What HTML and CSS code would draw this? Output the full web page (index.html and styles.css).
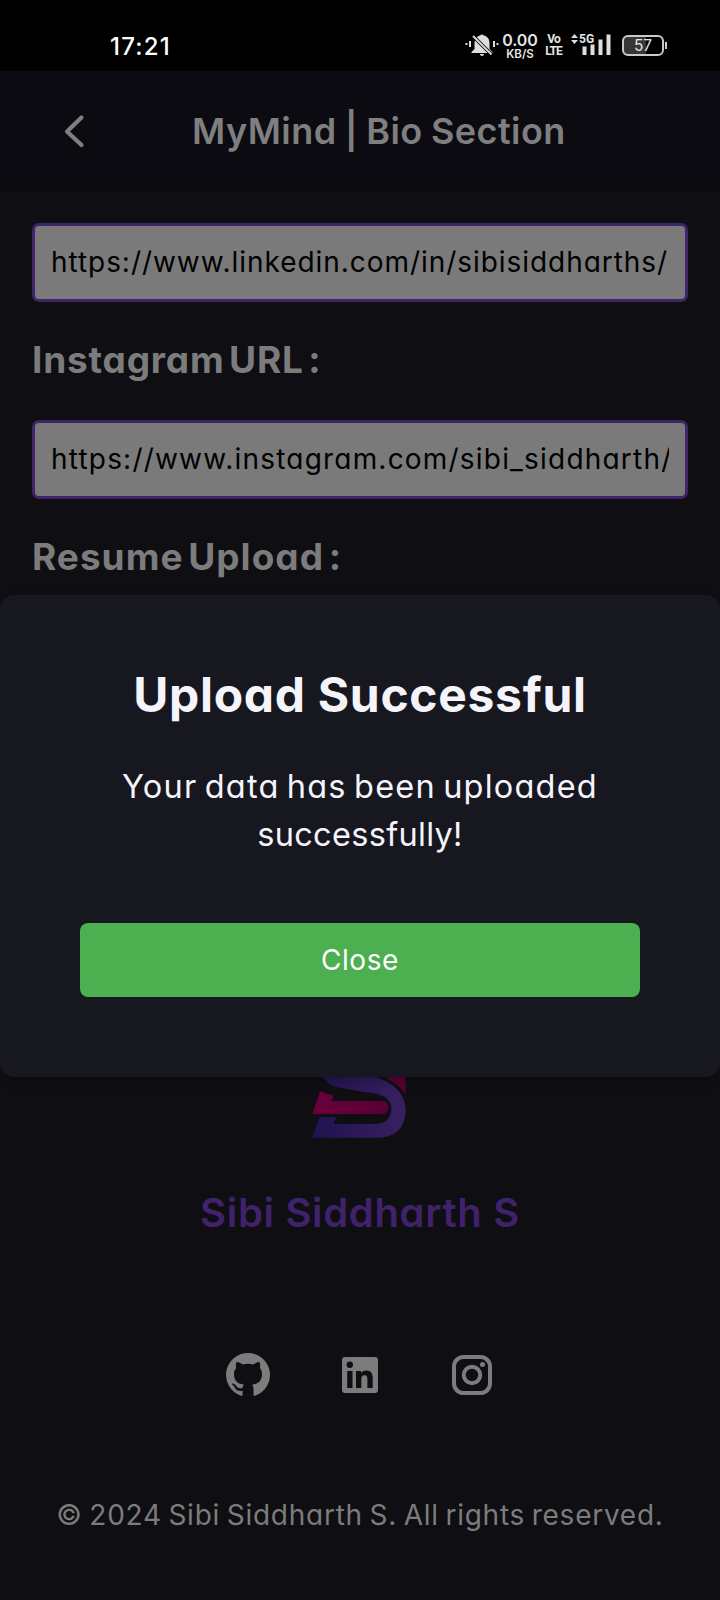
FILE: index.html
```
<!DOCTYPE html>
<html lang="en">
<head>
<meta charset="utf-8">
<title>MyMind | Bio Section</title>
<link rel="stylesheet" href="styles.css">
</head>
<body>
<div class="status">
  <span class="clock">17:21</span>
  <div class="indicators">
    <svg class="bell" width="34" height="24" viewBox="0 0 34 24" fill="#dedede"><path d="M15 2.5Q17 .5 19 2.5 24.500 4 24.500 10v6l3 3v1H6.500v-1l3-3v-6Q9.500 4 15 2.500zM15 21h4q0 2-2 2t-2-2z"/><path d="M7 2l20 20" stroke="#000" stroke-width="3.500"/><path d="M8 3l18.500 18.500" stroke="#dedede" stroke-width="1.800"/><path d="M5 8v6M29 8v6M1.500 10v2M32.500 10v2" stroke="#dedede" stroke-width="2"/></svg>
    <div class="speed"><span class="rate">0.00</span><span class="unit">KB/S</span></div>
    <div class="volte"><span>Vo</span><span>LTE</span></div>
    <div class="signal">
      <svg width="40" height="24" viewBox="0 0 40 24" fill="#dedede"><path d="M0 5l3.500-4L7 5zM0 7h7l-3.500 4zM11.500 13.500h4V22h-4zM19.500 11.500h4V22h-4zM27.500 6.500h4V22h-4zM35.500 1.500h4V22h-4z"/></svg>
      <span class="net">5G</span>
    </div>
    <div class="battery">57</div>
  </div>
</div>
<header class="bar">
  <svg class="back" width="22" height="34" viewBox="0 0 22 34" fill="none" stroke="#7f7f7f" stroke-width="4.200" stroke-linecap="round" stroke-linejoin="round"><path d="M17.500 3.500L3 17.500l14.500 13.500"/></svg>
  <h1 class="title">MyMind | Bio Section</h1>
</header>
<main class="form">
  <div class="field"><span class="url url-a">https://www.linkedin.com/in/sibisiddharths/</span></div>
  <h2 class="label label-a">Instagram URL :</h2>
  <div class="field"><span class="url url-b">https://www.instagram.com/sibi_siddharth/</span></div>
  <h2 class="label label-b">Resume Upload :</h2>
</main>
<footer class="footer">
  <svg class="logo" width="100" height="66" viewBox="60 48 300 198">
    <defs><linearGradient id="violet"><stop offset="0" stop-color="#21124f"/><stop offset="1" stop-color="#382061"/></linearGradient>
    <linearGradient id="crimson"><stop offset="0" stop-color="#68003d"/><stop offset="1" stop-color="#560030"/></linearGradient></defs>
    <path fill="url(#violet)" d="M88 40H205Q285 55 320 89Q347 117 347 156Q343 230 272 236H67L88 175H138L130 195H264Q303 190 304 148Q303 118 265 105Q200 96 134 83Q108 72 88 40z"/>
    <path fill="url(#crimson)" d="M90 97L130 110L124 126H282Q297 134 296 148Q293 164 278 165H67zM290 40H347V108Q335 82 293 61z"/>
  </svg>
  <div class="name">Sibi Siddharth S</div>
  <div class="social">
    <svg width="46" height="44" viewBox=".3 .8 23.400 22.400" fill="#7c7c7c"><path d="M12 .8a11.200 11.200 0 0 0-3.540 21.820c.56.1.76-.24.76-.54v-2.080c-3.110.68-3.770-1.320-3.770-1.320-.51-1.290-1.240-1.640-1.240-1.640-1.020-.69.070-.68.070-.68 1.120.08 1.720 1.160 1.720 1.160 1 1.710 2.620 1.220 3.260.93.100-.72.390-1.220.71-1.500-2.480-.28-5.100-1.240-5.100-5.530 0-1.220.43-2.220 1.150-3-.12-.29-.5-1.430.11-2.970 0 0 .94-.3 3.080 1.150a10.600 10.600 0 0 1 5.600 0c2.140-1.450 3.080-1.150 3.080-1.150.61 1.540.23 2.680.11 2.970.72.780 1.150 1.780 1.150 3 0 4.300-2.620 5.250-5.110 5.520.4.350.76 1.030.76 2.070v3.070c0 .3.200.65.770.54A11.200 11.200 0 0 0 12 .8z"/></svg>
    <svg width="46" height="36" viewBox="-5 0 46 36"><rect width="36" height="36" rx="3" fill="#7c7c7c"/><circle cx="7.800" cy="7.800" r="3.200" fill="#0f0e12"/><path fill="#0f0e12" d="M5.200 14h5.300v17H5.200zM14 14h5v2.300c1-1.700 3-2.700 5.200-2.700 5.300 0 6.500 3.400 6.500 8V31h-5.300v-8.200c0-2.300-.2-4.500-2.900-4.500-2.600 0-3.200 2-3.200 4.200V31H14z"/></svg>
    <svg width="46" height="40" viewBox="-3 0 46 40" fill="none" stroke="#7c7c7c" stroke-width="4"><rect x="2" y="2" width="36" height="36" rx="9.500"/><circle cx="20" cy="20" r="8.200"/><circle cx="30.500" cy="9.500" r="2.500" fill="#7c7c7c" stroke="none"/></svg>
  </div>
  <p class="copy">© 2024 Sibi Siddharth S. All rights reserved.</p>
</footer>
<section class="modal" role="dialog">
  <h2 class="modal-title">Upload Successful</h2>
  <p class="message"><span class="line-a">Your data has been uploaded</span><br><span class="line-b">successfully!</span></p>
  <button class="close">Close</button>
</section>
</body>
</html>
```
FILE: styles.css
```
* { box-sizing: border-box; }
body {
  margin: 0; width: 720px; height: 1600px; overflow: hidden; position: relative;
  display: flex; flex-direction: column;
  background: #0f0e12; color: #7c7c7c;
  font-family: Inter, "Liberation Sans", sans-serif;
  font-feature-settings: "cv11";
}
h1, h2, p { margin: 0; white-space: nowrap; }
.status { height: 71px; flex: none; background: #000; color: #fff; display: flex; justify-content: space-between; padding: 33px 50px 0 110px; }
.clock { font-size: 24px; line-height: 27px; font-weight: 500; letter-spacing: 1.2px; }
.indicators { display: flex; height: 24px; color: #e4e4e4; }
.speed { margin-left: 3px; width: 36px; display: flex; flex-direction: column; align-items: center; font-weight: 600; }
.rate { font-size: 16px; line-height: 14px; letter-spacing: -0.1px; }
.unit { font-size: 11.500px; line-height: 14px; }
.volte { width: 17px; margin-left: 7px; font: 700 12px/12px Roboto, sans-serif; letter-spacing: -0.9px; display: flex; flex-direction: column; align-items: center; }
.signal { margin-left: 9px; position: relative; width: 40px; }
.net { position: absolute; left: 8px; top: 1px; font: 700 12px/10px Roboto, sans-serif; background: #000; }
.battery { position: relative; width: 42px; height: 21px; margin: 2px 6px 0 11px; border: 2px solid #c9c9c9; border-radius: 6px; font-size: 15.500px; line-height: 18px; text-align: center; background: linear-gradient(90deg, #363636 57%, #000 57%); }
.battery::after { content: ""; position: absolute; right: -5px; top: 5px; width: 2px; height: 7px; background: #c9c9c9; }
.bar { height: 120px; flex: none; background: #0c0b12; display: flex; align-items: center; padding-left: 64px; }
.title { font-size: 36px; line-height: 54px; font-weight: 600; margin-left: 106px; color: #7f7f7f; letter-spacing: 0.44px; word-spacing: -1.3px; }
.form { height: 404px; flex: none; padding: 32px 32px 0; display: flex; flex-direction: column; }
.field { height: 79px; flex: none; border: 3px solid #402468; border-radius: 7px; background: #7a7a7a; padding: 0 16px; color: #000; display: flex; }
.url { flex: 1; overflow: hidden; white-space: nowrap; font-size: 28px; line-height: 72px; }
.url-a { letter-spacing: 0.95px; }
.url-b { letter-spacing: 1.2px; }
.label { flex: none; font-size: 37px; line-height: 54px; height: 118px; padding-top: 31px; font-weight: 700; word-spacing: -5px; }
.label-a { letter-spacing: 0.8px; }
.label-b { letter-spacing: 1px; }
.footer { margin-top: 481px; display: flex; flex-direction: column; align-items: center; }
.logo { margin-top: -1px; }
.name { margin-top: 42px; font-size: 40px; line-height: 60px; font-weight: 600; color: #3f226b; white-space: nowrap; letter-spacing: 0.66px; }
.social { height: 46px; margin-top: 109px; display: flex; align-items: center; justify-content: center; gap: 66px; }
.copy { margin-top: 96px; font-size: 28px; line-height: 42px; letter-spacing: 0.75px; word-spacing: -2px; }
.modal { position: absolute; left: 0; top: 595px; width: 720px; height: 482px; border-radius: 14px; background: #171720; box-shadow: 0 4px 12px rgba(0,0,0,.25); color: #f4f4fa; text-align: center; display: flex; flex-direction: column; padding: 64px 80px 80px; }
.modal-title { font-size: 48px; line-height: 72px; font-weight: 700; letter-spacing: 0.68px; }
.message { margin-top: 32px; font-size: 32.500px; line-height: 48px; }
.line-a { letter-spacing: 1.2px; word-spacing: -3px; }
.line-b { letter-spacing: 0.3px; }
.close { margin-top: auto; height: 74px; border: 0; border-radius: 8px; background: #4caf50; color: #fff; font: 400 28px/72px Inter, sans-serif; letter-spacing: 0.6px; }
```
